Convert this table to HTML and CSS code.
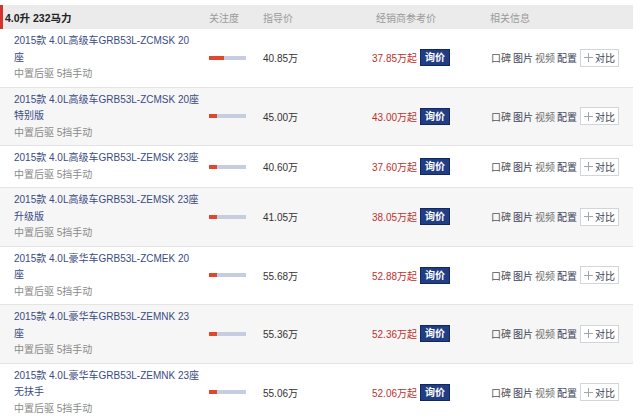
FILE: index.html
```html
<!DOCTYPE html>
<html lang="zh">
<head>
<meta charset="utf-8">
<link rel="stylesheet" href="styles.css">
</head>
<body>
<div class="table">
  <div class="head">
    <div class="h-title">4.0升 232马力</div>
    <div class="h-col">关注度</div>
    <div class="h-col">指导价</div>
    <div class="h-col h-dealer">经销商参考价</div>
    <div class="h-col">相关信息</div>
  </div>

  <div class="row">
    <div class="name"><a class="title">2015款 4.0L高级车GRB53L-ZCMSK 20 座</a><div class="sub">中置后驱 5挡手动</div></div>
    <div class="focus"><div class="bar"><span class="fill" style="width:15px"></span></div></div>
    <div class="price">40.85万</div>
    <div class="dealer"><span class="dprice">37.85万起</span><a class="ask">询价</a></div>
    <div class="links"><a class="l1">口碑</a><a class="l2">图片</a><a class="l3">视频</a><a class="l2">配置</a><span class="cmp"><svg width="9" height="9" viewBox="0 0 9 9"><path d="M4.5 0V9M0 4.5H9" stroke="#a0a4ae" stroke-width="1"/></svg>对比</span></div>
  </div>

  <div class="row alt">
    <div class="name"><a class="title">2015款 4.0L高级车GRB53L-ZCMSK 20座特别版</a><div class="sub">中置后驱 5挡手动</div></div>
    <div class="focus"><div class="bar"><span class="fill" style="width:8px"></span></div></div>
    <div class="price">45.00万</div>
    <div class="dealer"><span class="dprice">43.00万起</span><a class="ask">询价</a></div>
    <div class="links"><a class="l1">口碑</a><a class="l2">图片</a><a class="l3">视频</a><a class="l2">配置</a><span class="cmp"><svg width="9" height="9" viewBox="0 0 9 9"><path d="M4.5 0V9M0 4.5H9" stroke="#a0a4ae" stroke-width="1"/></svg>对比</span></div>
  </div>

  <div class="row">
    <div class="name"><a class="title">2015款 4.0L高级车GRB53L-ZEMSK 23座</a><div class="sub">中置后驱 5挡手动</div></div>
    <div class="focus"><div class="bar"><span class="fill" style="width:8px"></span></div></div>
    <div class="price">40.60万</div>
    <div class="dealer"><span class="dprice">37.60万起</span><a class="ask">询价</a></div>
    <div class="links"><a class="l1">口碑</a><a class="l2">图片</a><a class="l3">视频</a><a class="l2">配置</a><span class="cmp"><svg width="9" height="9" viewBox="0 0 9 9"><path d="M4.5 0V9M0 4.5H9" stroke="#a0a4ae" stroke-width="1"/></svg>对比</span></div>
  </div>

  <div class="row alt">
    <div class="name"><a class="title">2015款 4.0L高级车GRB53L-ZEMSK 23座升级版</a><div class="sub">中置后驱 5挡手动</div></div>
    <div class="focus"><div class="bar"><span class="fill" style="width:8px"></span></div></div>
    <div class="price">41.05万</div>
    <div class="dealer"><span class="dprice">38.05万起</span><a class="ask">询价</a></div>
    <div class="links"><a class="l1">口碑</a><a class="l2">图片</a><a class="l3">视频</a><a class="l2">配置</a><span class="cmp"><svg width="9" height="9" viewBox="0 0 9 9"><path d="M4.5 0V9M0 4.5H9" stroke="#a0a4ae" stroke-width="1"/></svg>对比</span></div>
  </div>

  <div class="row">
    <div class="name"><a class="title">2015款 4.0L豪华车GRB53L-ZCMEK 20 座</a><div class="sub">中置后驱 5挡手动</div></div>
    <div class="focus"><div class="bar"><span class="fill" style="width:8px"></span></div></div>
    <div class="price">55.68万</div>
    <div class="dealer"><span class="dprice">52.88万起</span><a class="ask">询价</a></div>
    <div class="links"><a class="l1">口碑</a><a class="l2">图片</a><a class="l3">视频</a><a class="l2">配置</a><span class="cmp"><svg width="9" height="9" viewBox="0 0 9 9"><path d="M4.5 0V9M0 4.5H9" stroke="#a0a4ae" stroke-width="1"/></svg>对比</span></div>
  </div>

  <div class="row alt">
    <div class="name"><a class="title">2015款 4.0L豪华车GRB53L-ZEMNK 23 座</a><div class="sub">中置后驱 5挡手动</div></div>
    <div class="focus"><div class="bar"><span class="fill" style="width:8px"></span></div></div>
    <div class="price">55.36万</div>
    <div class="dealer"><span class="dprice">52.36万起</span><a class="ask">询价</a></div>
    <div class="links"><a class="l1">口碑</a><a class="l2">图片</a><a class="l3">视频</a><a class="l2">配置</a><span class="cmp"><svg width="9" height="9" viewBox="0 0 9 9"><path d="M4.5 0V9M0 4.5H9" stroke="#a0a4ae" stroke-width="1"/></svg>对比</span></div>
  </div>

  <div class="row">
    <div class="name"><a class="title">2015款 4.0L豪华车GRB53L-ZEMNK 23座无扶手</a><div class="sub">中置后驱 5挡手动</div></div>
    <div class="focus"><div class="bar"><span class="fill" style="width:8px"></span></div></div>
    <div class="price">55.06万</div>
    <div class="dealer"><span class="dprice">52.06万起</span><a class="ask">询价</a></div>
    <div class="links"><a class="l1">口碑</a><a class="l2">图片</a><a class="l3">视频</a><a class="l2">配置</a><span class="cmp"><svg width="9" height="9" viewBox="0 0 9 9"><path d="M4.5 0V9M0 4.5H9" stroke="#a0a4ae" stroke-width="1"/></svg>对比</span></div>
  </div>
</div>
</body>
</html>
```

FILE: styles.css
```css
html, body {
  margin: 0;
  padding: 0;
  background: #fff;
}
body {
  padding-top: 5px;
  font-family: "Liberation Sans", "Noto Sans CJK SC", sans-serif;
  font-size: 10px;
  color: #333;
}
.table {
  width: 633px;
}
.head,
.row {
  display: grid;
  grid-template-columns: 209px 54px 109px 118px 143px;
  align-items: center;
}
.head {
  height: 24px;
  background: #ebebeb;
  box-shadow: inset 3px 0 0 #d0362c;
}
.h-title {
  padding-left: 5px;
  font-size: 10.5px;
  font-weight: bold;
  color: #222;
}
.h-col {
  color: #9a9a9a;
}
.h-dealer {
  padding-left: 4px;
}
.row {
  border-bottom: 1px solid #e4e4e4;
  background: #fff;
}
.row.alt {
  background: #f6f6f6;
}
.name {
  padding: 4px 0 4px 14px;
  line-height: 16.5px;
}
.title {
  display: block;
  width: 186.5px;
  color: #3a4b82;
}
.sub {
  color: #8a8a8a;
}
.bar {
  width: 37px;
  height: 4px;
  background: #c7cde0;
  display: flex;
}
.fill {
  display: block;
  height: 100%;
  background: #e2462b;
}
.price {
  color: #333;
}
.dealer {
  display: flex;
  align-items: center;
  gap: 3px;
}
.dprice {
  color: #c0302e;
}
.ask {
  width: 30px;
  height: 17px;
  box-sizing: border-box;
  background: #213e84;
  border: 1px solid #10285c;
  color: #fff;
  font-weight: bold;
  text-align: center;
  line-height: 15px;
}
.links {
  display: flex;
  align-items: center;
  gap: 2px;
  padding-left: 1px;
}
.l1 { color: #555; }
.l2 { color: #3c4258; }
.l3 { color: #707070; }
.cmp {
  margin-left: 1px;
  width: 39px;
  height: 18px;
  box-sizing: border-box;
  border: 1px solid #d2d5dc;
  background: #fff;
  color: #3c4258;
  display: flex;
  align-items: center;
  justify-content: center;
  gap: 2px;
}
```
